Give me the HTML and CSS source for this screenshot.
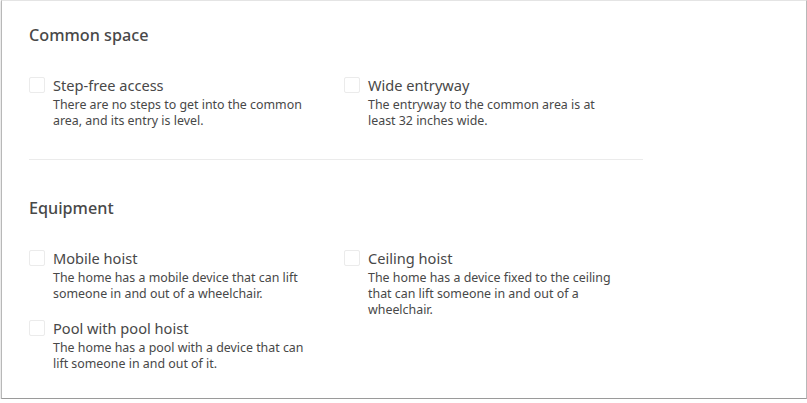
FILE: index.html
```html
<!DOCTYPE html>
<html lang="en">
<head>
    <meta charset="UTF-8">
    <title>Accessibility</title>
    <link rel="stylesheet" href="styles.css">
</head>
<body>
    <div class="frame">
        <section class="group">
            <h2 class="group-title">Common space</h2>
            <div class="options">
                <label class="option">
                    <span class="box"></span>
                    <span class="option-text">
                        <span class="option-name">Step-free access</span>
                        <span class="option-desc">There are no steps to get into the common area, and its entry is level.</span>
                    </span>
                </label>
                <label class="option">
                    <span class="box"></span>
                    <span class="option-text">
                        <span class="option-name">Wide entryway</span>
                        <span class="option-desc">The entryway to the common area is at least 32 inches wide.</span>
                    </span>
                </label>
            </div>
        </section>

        <hr class="divider">

        <section class="group">
            <h2 class="group-title">Equipment</h2>
            <div class="options">
                <label class="option">
                    <span class="box"></span>
                    <span class="option-text">
                        <span class="option-name">Mobile hoist</span>
                        <span class="option-desc">The home has a mobile device that can lift someone in and out of a wheelchair.</span>
                    </span>
                </label>
                <label class="option">
                    <span class="box"></span>
                    <span class="option-text">
                        <span class="option-name">Ceiling hoist</span>
                        <span class="option-desc">The home has a device fixed to the ceiling that can lift someone in and out of a wheelchair.</span>
                    </span>
                </label>
                <label class="option">
                    <span class="box"></span>
                    <span class="option-text">
                        <span class="option-name">Pool with pool hoist</span>
                        <span class="option-desc">The home has a pool with a device that can lift someone in and out of it.</span>
                    </span>
                </label>
            </div>
        </section>
    </div>
</body>
</html>
```

FILE: styles.css
```css
html, body {
    margin: 0;
    padding: 0;
    background-color: #fff;
}

body {
    font-family: 'Noto Sans', 'Open Sans', sans-serif;
    color: #484848;
}

.frame {
    box-sizing: border-box;
    width: 806px;
    height: 399px;
    margin-left: 1px;
    border: 1px solid #e4e4e4;
    border-left-color: #b8b8b8;
    border-right-color: #b8b8b8;
    border-bottom-color: #9a9a9a;
    box-shadow: 0 1px 2px rgba(0, 0, 0, 0.25);
    padding: 23px 0 0 19px;
}

.group {
    width: 630px;
}

.group-title {
    margin: 0 0 29px 8px;
    font-size: 16.2px;
    line-height: 22px;
    font-weight: 500;
}

.options {
    display: grid;
    grid-template-columns: 1fr 1fr;
}

.option {
    display: flex;
    padding: 0 8px;
}

.box {
    flex: none;
    width: 14px;
    height: 14px;
    margin-top: 2px;
    margin-right: 8px;
    border: 1px solid #ebebeb;
    border-radius: 2px;
}

.option-text {
    display: flex;
    flex-direction: column;
}

.option-name {
    font-size: 14.6px;
    line-height: 20px;
}

.option-desc {
    max-width: 252px;
    margin-top: 2px;
    font-size: 12.4px;
    line-height: 16px;
}

.divider {
    width: 614px;
    margin: 30px 0 37px 8px;
    border: none;
    border-top: 1px solid #ebebeb;
}
```
